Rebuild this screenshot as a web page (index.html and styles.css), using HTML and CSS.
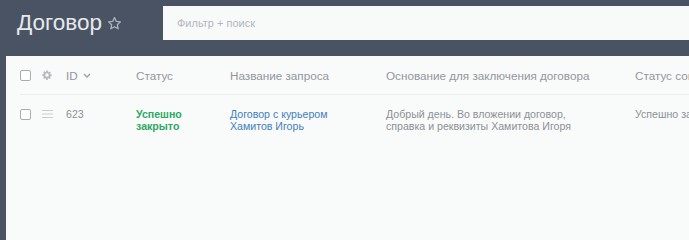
FILE: index.html
```html
<!DOCTYPE html>
<html lang="ru">
<head>
    <meta charset="UTF-8">
    <meta name="viewport" content="width=device-width, initial-scale=1.0">
    <title>Договор</title>
    <link rel="stylesheet" href="styles.css">
</head>
<body>
    <div class="topbar">
        <h1 class="title">Договор
            <svg class="star" width="15" height="15" viewBox="0 0 24 24"><path d="M12 2.5l2.9 6.2 6.6.7-5 4.5 1.4 6.6L12 17.2l-5.9 3.3 1.4-6.6-5-4.5 6.6-.7z" fill="none" stroke="#aeb5bf" stroke-width="2" stroke-linejoin="round"/></svg>
        </h1>
        <div class="search">Фильтр + поиск</div>
    </div>

    <div class="panel">
        <div class="row head">
            <div class="cell c-check"><span class="box"></span></div>
            <div class="cell c-icon">
                <svg width="10" height="10" viewBox="0 0 20 20"><path d="M10 6.5a3.5 3.5 0 1 0 0 7 3.5 3.5 0 0 0 0-7zM8.6 1h2.8l.5 2.6 1.6.7 2.2-1.5 2 2-1.5 2.2.7 1.6 2.6.5v2.8l-2.6.5-.7 1.6 1.5 2.2-2 2-2.2-1.5-1.6.7-.5 2.6H8.6l-.5-2.6-1.6-.7-2.2 1.5-2-2 1.5-2.2-.7-1.6L.5 11.4V8.6l2.6-.5.7-1.6-1.5-2.2 2-2 2.2 1.5 1.6-.7z" fill="#b7bbc0" fill-rule="evenodd"/></svg>
            </div>
            <div class="cell c-id">ID
                <svg class="chev" width="8" height="5" viewBox="0 0 8 5"><path d="M1 1l3 3 3-3" fill="none" stroke="#9aa0a6" stroke-width="1.3"/></svg>
            </div>
            <div class="cell c-status">Статус</div>
            <div class="cell c-name">Название запроса</div>
            <div class="cell c-basis">Основание для заключения договора</div>
            <div class="cell c-state">Статус согласования</div>
        </div>

        <div class="row data">
            <div class="cell c-check"><span class="box"></span></div>
            <div class="cell c-icon">
                <svg width="11" height="8" viewBox="0 0 11 8"><path d="M0 .5h11M0 4h11M0 7.5h11" stroke="#c9ccd0" stroke-width="1.2"/></svg>
            </div>
            <div class="cell c-id">623</div>
            <div class="cell c-status ok">Успешно<br>закрыто</div>
            <div class="cell c-name"><a href="#">Договор с курьером<br>Хамитов Игорь</a></div>
            <div class="cell c-basis">Добрый день. Во вложении договор,<br>справка и реквизиты Хамитова Игоря</div>
            <div class="cell c-state">Успешно завершено</div>
        </div>
    </div>
</body>
</html>
```

FILE: styles.css
```css
body {
    margin: 0;
    font-family: "Liberation Sans", Arial, sans-serif;
    background: #4a5363;
    height: 240px;
    overflow: hidden;
}

.topbar {
    display: flex;
    align-items: center;
    height: 46px;
    padding: 0 0 0 17px;
}

.title {
    margin: 0;
    font-size: 22.5px;
    font-weight: normal;
    color: #e6e9ec;
    width: 146px;
    display: flex;
    align-items: center;
    gap: 5px;
    white-space: nowrap;
}

.search {
    flex: 1;
    height: 34px;
    background: #f8f9f9;
    color: #b3b7bc;
    font-size: 11px;
    line-height: 34px;
    padding-left: 14px;
    white-space: nowrap;
}

.panel {
    margin: 10px 0 0 6px;
    background: #f9fafa;
    height: 190px;
    padding-left: 14px;
    overflow: hidden;
}

.row {
    display: flex;
    white-space: nowrap;
    color: #8c9196;
}

.head {
    height: 38px;
    align-items: center;
    font-size: 11.7px;
    border-bottom: 1px solid #eceeef;
    color: #93979c;
}

.data {
    padding-top: 13px;
    font-size: 10.6px;
    line-height: 12px;
    align-items: flex-start;
}

.cell {
    flex: none;
}

.c-check { width: 22px; display: flex; }
.c-icon { width: 24px; display: flex; align-items: center; }
.c-id { width: 70px; display: flex; align-items: center; gap: 5px; }
.c-status { width: 94px; }
.c-name { width: 156px; }
.c-basis { width: 249px; }
.c-state { width: 200px; }

.data .c-check, .data .c-icon { height: 12px; align-items: center; }

.box {
    width: 9px;
    height: 9px;
    border: 1px solid #a9adb2;
    border-radius: 2px;
    background: #fff;
}

.ok {
    color: #2ea862;
    font-weight: bold;
}

a {
    color: #3f7fbf;
    text-decoration: none;
}
```
